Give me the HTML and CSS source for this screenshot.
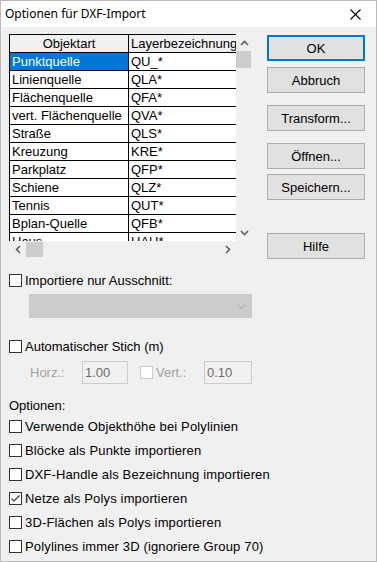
FILE: index.html
```html
<!DOCTYPE html>
<html lang="de">
<head>
    <meta charset="UTF-8">
    <meta name="viewport" content="width=device-width, initial-scale=1.0">
    <title>Optionen für DXF-Import</title>
    <link rel="stylesheet" href="styles.css">
</head>
<body>
    <div class="dialog">
        <div class="titlebar">
            <span class="title">Optionen für DXF-Import</span>
            <svg class="close" width="11" height="11" viewBox="0 0 11 11">
                <path d="M0.5 0.5 L10.5 10.5 M10.5 0.5 L0.5 10.5" stroke="#000" stroke-width="1.1" fill="none"/>
            </svg>
        </div>

        <div class="body">
            <div class="main">
                <div class="left">
                    <div class="listbox">
                        <div class="list-view">
                            <div class="grid">
                                <div class="cell head center">Objektart</div>
                                <div class="cell head">Layerbezeichnung</div>
                                <div class="cell selected">Punktquelle</div>
                                <div class="cell">QU_*</div>
                                <div class="cell">Linienquelle</div>
                                <div class="cell">QLA*</div>
                                <div class="cell">Flächenquelle</div>
                                <div class="cell">QFA*</div>
                                <div class="cell">vert. Flächenquelle</div>
                                <div class="cell">QVA*</div>
                                <div class="cell">Straße</div>
                                <div class="cell">QLS*</div>
                                <div class="cell">Kreuzung</div>
                                <div class="cell">KRE*</div>
                                <div class="cell">Parkplatz</div>
                                <div class="cell">QFP*</div>
                                <div class="cell">Schiene</div>
                                <div class="cell">QLZ*</div>
                                <div class="cell">Tennis</div>
                                <div class="cell">QUT*</div>
                                <div class="cell">Bplan-Quelle</div>
                                <div class="cell">QFB*</div>
                                <div class="cell">Haus</div>
                                <div class="cell">HAU*</div>
                            </div>
                        </div>
                        <div class="vscroll">
                            <div class="arrow-btn">
                                <svg width="9" height="6" viewBox="0 0 9 6"><path d="M1 5 L4.5 1.5 L8 5" stroke="#606060" stroke-width="1.6" fill="none"/></svg>
                            </div>
                            <div class="vthumb"></div>
                            <div class="spacer"></div>
                            <div class="arrow-btn">
                                <svg width="9" height="6" viewBox="0 0 9 6"><path d="M1 1 L4.5 4.5 L8 1" stroke="#606060" stroke-width="1.6" fill="none"/></svg>
                            </div>
                        </div>
                        <div class="hscroll">
                            <div class="arrow-btn">
                                <svg width="6" height="9" viewBox="0 0 6 9"><path d="M5 1 L1.5 4.5 L5 8" stroke="#606060" stroke-width="1.6" fill="none"/></svg>
                            </div>
                            <div class="hthumb"></div>
                            <div class="spacer"></div>
                            <div class="arrow-btn">
                                <svg width="6" height="9" viewBox="0 0 6 9"><path d="M1 1 L4.5 4.5 L1 8" stroke="#606060" stroke-width="1.6" fill="none"/></svg>
                            </div>
                        </div>
                        <div class="corner"></div>
                    </div>
                </div>

                <div class="buttons">
                    <button class="btn default btn-ok">OK</button>
                    <button class="btn btn-cancel">Abbruch</button>
                    <button class="btn btn-transform">Transform...</button>
                    <button class="btn btn-open">Öffnen...</button>
                    <button class="btn btn-save">Speichern...</button>
                    <button class="btn btn-help">Hilfe</button>
                </div>
            </div>

            <label class="check row-cut"><span class="box"></span>Importiere nur Ausschnitt:</label>
            <div class="combo">
                <svg width="9" height="5" viewBox="0 0 9 5"><path d="M0.5 0.5 L4.5 4.5 L8.5 0.5" stroke="#a6a6a6" stroke-width="1" fill="none"/></svg>
            </div>

            <label class="check row-auto"><span class="box"></span>Automatischer Stich (m)</label>
            <div class="stich">
                <span class="muted horz">Horz.:</span>
                <span class="field field-h">1.00</span>
                <label class="check muted vert"><span class="box off"></span>Vert.:</label>
                <span class="field field-v">0.10</span>
            </div>

            <div class="group-label">Optionen:</div>
            <label class="check opt first"><span class="box"></span>Verwende Objekthöhe bei Polylinien</label>
            <label class="check opt"><span class="box"></span>Blöcke als Punkte importieren</label>
            <label class="check opt"><span class="box"></span>DXF-Handle als Bezeichnung importieren</label>
            <label class="check opt"><span class="box"><svg width="11" height="11" viewBox="0 0 11 11"><path d="M1.5 5.5 L4 8 L9.5 2.5" stroke="#333" stroke-width="1.1" fill="none"/></svg></span>Netze als Polys importieren</label>
            <label class="check opt"><span class="box"></span>3D-Flächen als Polys importieren</label>
            <label class="check opt"><span class="box"></span>Polylines immer 3D (ignoriere Group 70)</label>
        </div>
    </div>
</body>
</html>
```

FILE: styles.css
```css
body {
    margin: 0;
    padding: 0;
    background-color: #f0f0f0;
    font-family: "Liberation Sans", Arial, sans-serif;
    font-size: 13px;
    color: #000;
}
.dialog {
    width: 377px;
    height: 562px;
    box-sizing: border-box;
    border: 1px solid #b9b9b9;
    background-color: #f0f0f0;
    overflow: hidden;
}
.titlebar {
    height: 26px;
    background-color: #fff;
    display: flex;
    align-items: center;
    justify-content: space-between;
    padding: 0 15px 0 4px;
}
.title {
    font-family: "Noto Sans", "Open Sans", sans-serif;
    font-size: 12px;
    padding-bottom: 1px;
}
.close {
    display: block;
}
.body {
    padding: 7px 8px 0 8px;
}
.main {
    display: flex;
}
.left {
    width: 244px;
}
/* list with grid lines */
.listbox {
    display: grid;
    grid-template-columns: 227px 17px;
    grid-template-rows: 207px 17px;
}
.list-view {
    overflow: hidden;
    background-color: #fff;
}
.grid {
    display: grid;
    grid-template-columns: 118px 130px;
    grid-auto-rows: 17px;
    gap: 1px;
    padding: 1px 0 0 1px;
    background-color: #000;
    width: 250px;
}
.cell {
    background-color: #fff;
    line-height: 17px;
    padding-left: 2px;
    white-space: nowrap;
    overflow: hidden;
}
.cell.head {
    background-color: #f0f0f0;
}
.cell.center {
    text-align: center;
    padding-left: 0;
}
.cell.selected {
    background-color: #0078d7;
    color: #fff;
}
.vscroll {
    display: flex;
    flex-direction: column;
}
.hscroll {
    display: flex;
}
.arrow-btn {
    width: 17px;
    height: 17px;
    display: flex;
    align-items: center;
    justify-content: center;
}
.spacer {
    flex: 1;
}
.vthumb {
    width: 15px;
    height: 17px;
    background-color: #cdcdcd;
}
.hthumb {
    width: 17px;
    height: 15px;
    margin-top: 1px;
    background-color: #cdcdcd;
}
/* buttons */
.buttons {
    margin-left: 14px;
    width: 98px;
    display: flex;
    flex-direction: column;
}
.btn {
    height: 26px;
    width: 98px;
    box-sizing: border-box;
    background-color: #e1e1e1;
    border: 1px solid #adadad;
    font-family: "Liberation Sans", Arial, sans-serif;
    font-size: 13px;
    color: #000;
    padding: 0;
}
.btn.default {
    border: 2px solid #0078d7;
}
.btn-ok { margin-top: 1px; }
.btn-cancel { margin-top: 6px; }
.btn-transform { margin-top: 12px; }
.btn-open { margin-top: 12px; }
.btn-save { margin-top: 5px; }
.btn-help { margin-top: 33px; }
/* checkboxes */
.check {
    display: flex;
    align-items: center;
    height: 17px;
    line-height: 17px;
}
.box {
    width: 13px;
    height: 13px;
    box-sizing: border-box;
    border: 1px solid #333;
    background-color: #fff;
    margin-right: 3px;
    display: flex;
    align-items: center;
    justify-content: center;
}
.box.off {
    border-color: #cccccc;
}
.muted {
    color: #a0a0a0;
}
.row-cut {
    margin-top: 13px;
}
.combo {
    margin: 5px 0 0 20px;
    width: 223px;
    height: 24px;
    box-sizing: border-box;
    background-color: #cccccc;
    border: 1px solid #cccccc;
    display: flex;
    align-items: center;
    justify-content: flex-end;
    padding-right: 5px;
}
.row-auto {
    margin-top: 20px;
}
.stich {
    margin-top: 6px;
    display: flex;
    align-items: center;
    height: 23px;
}
.horz {
    margin-left: 21px;
    width: 52px;
}
.field {
    height: 23px;
    box-sizing: border-box;
    border: 1px solid #cccccc;
    color: #6d6d6d;
    line-height: 21px;
    padding-left: 2px;
}
.field-h {
    width: 46px;
}
.vert {
    margin-left: 12px;
    width: 64px;
}
.field-v {
    width: 48px;
}
.group-label {
    margin-top: 13px;
    line-height: 17px;
}
.opt {
    margin-top: 7px;
    letter-spacing: 0.15px;
}
.opt.first {
    margin-top: 4px;
}
```
